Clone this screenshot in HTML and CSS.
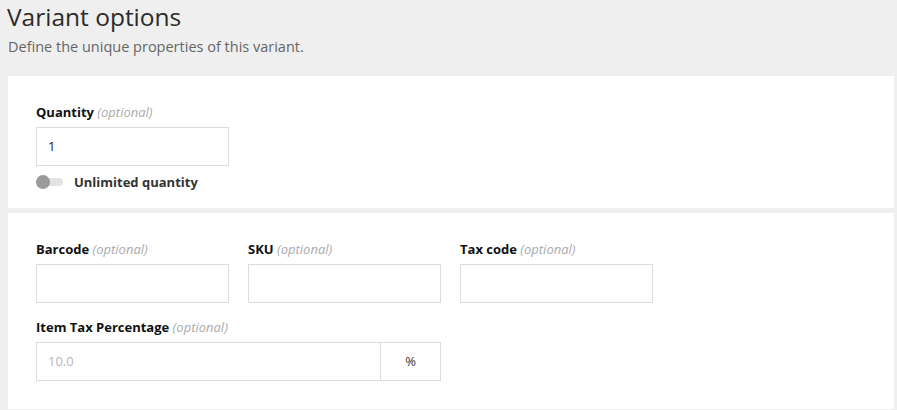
FILE: index.html
```html
<!DOCTYPE html>
<html>
<head>
<meta charset="utf-8">
<link rel="stylesheet" href="styles.css">
</head>
<body>
<div class="page">
  <h1 class="title">Variant options</h1>
  <p class="subtitle">Define the unique properties of this variant.</p>
  <section class="panel panel-qty">
    <div class="field">
      <label class="label">Quantity <em>(optional)</em></label>
      <div class="input">1</div>
    </div>
    <div class="toggle-row">
      <span class="toggle"><span class="knob"></span></span>
      <span class="toggle-label">Unlimited quantity</span>
    </div>
  </section>
  <section class="panel panel-codes">
    <div class="row">
      <div class="field">
        <label class="label">Barcode <em>(optional)</em></label>
        <div class="input"></div>
      </div>
      <div class="field">
        <label class="label">SKU <em>(optional)</em></label>
        <div class="input"></div>
      </div>
      <div class="field">
        <label class="label">Tax code <em>(optional)</em></label>
        <div class="input"></div>
      </div>
    </div>
    <div class="field">
      <label class="label">Item Tax Percentage <em>(optional)</em></label>
      <div class="input-group">
        <div class="input placeholder">10.0</div>
        <div class="addon">%</div>
      </div>
    </div>
  </section>
</div>
</body>
</html>
```

FILE: styles.css
```css
html, body {
  margin: 0;
  padding: 0;
  background: #efefef;
}
body {
  font-family: "Open Sans", "Liberation Sans", sans-serif;
  color: #222;
}
.page {
  padding: 0 3px 0 8px;
}
.title {
  margin: 0 0 0 -1px;
  padding-top: 2px;
  font-size: 24.5px;
  font-weight: 400;
  line-height: 30px;
  color: #2b2b2b;
}
.subtitle {
  margin: 5px 0 0;
  font-size: 14.5px;
  line-height: 20px;
  color: #666;
}
.panel {
  background: #fff;
  padding: 28px 28px 0;
  box-sizing: border-box;
}
.panel-qty {
  margin-top: 19px;
  height: 132px;
}
.panel-codes {
  margin-top: 5px;
  padding-top: 28px;
  height: 196px;
}
.row {
  display: flex;
  gap: 19px;
}
.field {
  display: flex;
  flex-direction: column;
}
.label {
  font-size: 13px;
  font-weight: 700;
  line-height: 16px;
  color: #111;
  margin-bottom: 7px;
}
.label em {
  font-weight: 400;
  color: #aaa;
}
.input {
  box-sizing: border-box;
  width: 193px;
  height: 39px;
  border: 1px solid #dcdcdc;
  background: #fff;
  font-size: 13px;
  line-height: 37px;
  padding: 0 11px;
  color: #222;
}
.placeholder {
  color: #b5b5b5;
}
.panel-codes .row + .field {
  margin-top: 16px;
}
.input-group {
  display: flex;
  width: 405px;
}
.input-group .input {
  flex: 1;
}
.addon {
  box-sizing: border-box;
  width: 60px;
  height: 39px;
  border: 1px solid #dcdcdc;
  border-left: none;
  font-size: 13px;
  line-height: 37px;
  text-align: center;
  color: #333;
}
.toggle-row {
  display: flex;
  align-items: center;
  gap: 11px;
  margin-top: 7px;
}
.toggle {
  position: relative;
  width: 27px;
  height: 8px;
  border-radius: 4px;
  background: #e3e3e3;
}
.knob {
  position: absolute;
  left: 0;
  top: -3px;
  width: 14px;
  height: 14px;
  border-radius: 50%;
  background: #9b9b9b;
}
.toggle-label {
  font-size: 13px;
  font-weight: 700;
  line-height: 18px;
  color: #333;
}
```
